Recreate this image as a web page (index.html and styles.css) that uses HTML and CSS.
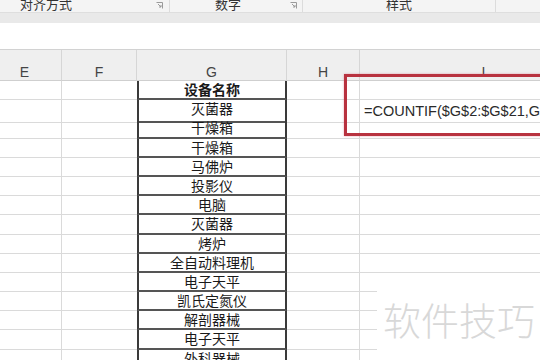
FILE: index.html
```html
<!DOCTYPE html>
<html lang="zh-CN">
<head>
    <meta charset="UTF-8">
    <meta name="viewport" content="width=device-width, initial-scale=1.0">
    <title>COUNTIF</title>
    <link rel="stylesheet" href="styles.css">
</head>
<body>

    <!-- Ribbon group labels (cut at the top) -->
    <div class="ribbon">
        <div class="group group-align">
            <span class="group-label">对齐方式</span>
            <svg class="launcher" width="7" height="7" viewBox="0 0 7 7"><path d="M0.5 0.5H6.5V6.5" fill="none" stroke="#9a9a9a"/><path d="M2 2L5 5M5 3V5H3" fill="none" stroke="#9a9a9a"/></svg>
        </div>
        <div class="group group-number">
            <span class="group-label">数字</span>
            <svg class="launcher" width="7" height="7" viewBox="0 0 7 7"><path d="M0.5 0.5H6.5V6.5" fill="none" stroke="#9a9a9a"/><path d="M2 2L5 5M5 3V5H3" fill="none" stroke="#9a9a9a"/></svg>
        </div>
        <div class="group group-style">
            <span class="group-label">样式</span>
        </div>
        <div class="group group-rest"></div>
    </div>
    <div class="ribbon-band"></div>
    <div class="formula-area"></div>

    <section class="sheet">
        <div class="row head">
            <div class="cell">E</div>
            <div class="cell">F</div>
            <div class="cell">G</div>
            <div class="cell">H</div>
            <div class="cell">I</div>
        </div>

        <div class="row"><div class="cell"></div><div class="cell"></div><div class="cell name title">设备名称</div><div class="cell"></div><div class="cell"></div></div>
        <div class="row"><div class="cell"></div><div class="cell"></div><div class="cell name">灭菌器</div><div class="cell"></div><div class="cell formula">=COUNTIF($G$2:$G$21,G</div></div>
        <div class="row"><div class="cell"></div><div class="cell"></div><div class="cell name">干燥箱</div><div class="cell"></div><div class="cell"></div></div>
        <div class="row"><div class="cell"></div><div class="cell"></div><div class="cell name">干燥箱</div><div class="cell"></div><div class="cell"></div></div>
        <div class="row"><div class="cell"></div><div class="cell"></div><div class="cell name">马佛炉</div><div class="cell"></div><div class="cell"></div></div>
        <div class="row"><div class="cell"></div><div class="cell"></div><div class="cell name">投影仪</div><div class="cell"></div><div class="cell"></div></div>
        <div class="row"><div class="cell"></div><div class="cell"></div><div class="cell name">电脑</div><div class="cell"></div><div class="cell"></div></div>
        <div class="row"><div class="cell"></div><div class="cell"></div><div class="cell name">灭菌器</div><div class="cell"></div><div class="cell"></div></div>
        <div class="row"><div class="cell"></div><div class="cell"></div><div class="cell name">烤炉</div><div class="cell"></div><div class="cell"></div></div>
        <div class="row"><div class="cell"></div><div class="cell"></div><div class="cell name">全自动料理机</div><div class="cell"></div><div class="cell"></div></div>
        <div class="row"><div class="cell"></div><div class="cell"></div><div class="cell name">电子天平</div><div class="cell"></div><div class="cell"></div></div>
        <div class="row"><div class="cell"></div><div class="cell"></div><div class="cell name">凯氏定氮仪</div><div class="cell"></div><div class="cell"></div></div>
        <div class="row"><div class="cell"></div><div class="cell"></div><div class="cell name">解剖器械</div><div class="cell"></div><div class="cell"></div></div>
        <div class="row"><div class="cell"></div><div class="cell"></div><div class="cell name">电子天平</div><div class="cell"></div><div class="cell"></div></div>
        <div class="row"><div class="cell"></div><div class="cell"></div><div class="cell name">外科器械</div><div class="cell"></div><div class="cell"></div></div>

        <!-- Highlight round the formula cell -->
        <div class="highlight"></div>
    </section>

    <div class="watermark">软件技巧</div>

</body>
</html>
```

FILE: styles.css
```css
/* General */
body {
    margin: 0;
    width: 540px;
    height: 360px;
    overflow: hidden;
    position: relative;
    background: #fff;
    font-family: "Liberation Sans", "Noto Sans CJK SC", sans-serif;
    color: #222;
}

/* Ribbon */
.ribbon {
    display: flex;
    height: 12px;
    background: #f4f4f4;
    border-bottom: 1px solid #dedede;
    overflow: hidden;
}

.group {
    display: flex;
    align-items: flex-start;
    border-right: 1px solid #dcdcdc;
    box-sizing: border-box;
}

.group-label {
    font-family: "Noto Sans CJK SC", sans-serif;
    font-size: 13px;
    line-height: 13px;
    margin-top: -3px;
    color: #333;
}

.launcher {
    margin-left: auto;
    margin-top: 2px;
}

.group-align {
    width: 170px;
    padding: 0 6px 0 20px;
}

.group-number {
    width: 133px;
    padding: 0 5px 0 45px;
}

.group-style {
    width: 193px;
    justify-content: center;
}

.group-rest {
    flex: 1;
    border-right: none;
}

.ribbon-band {
    height: 10px;
    background: #e9e9e9;
}

.formula-area {
    height: 26px;
    background: #fff;
    border-bottom: 1px solid #d2d2d2;
}

/* Sheet */
.sheet {
    position: relative;
    margin-left: -12px;
    width: 620px;
}

.row {
    display: grid;
    grid-template-columns: 74px 75px 150px 73px 1fr;
    height: 19.2px;
}

.cell {
    box-sizing: border-box;
    border-right: 1px solid #dadada;
    border-bottom: 1px solid #dadada;
    font-size: 14px;
    line-height: 18px;
    white-space: nowrap;
}

.row.head {
    height: 31px;
    background: #efefef;
}

.row.head .cell {
    text-align: center;
    color: #444;
    padding-top: 15px;
    line-height: 14px;
    border-bottom-color: #cfcfcf;
    border-right-color: #d6d6d6;
}

.row .cell:nth-child(2) {
    border-right: none;
}

.row.head .cell:nth-child(2) {
    border-right: 1px solid #d6d6d6;
}

.cell.name {
    border-left: 2px solid #3a3a3a;
    border-right: 2px solid #3a3a3a;
    border-bottom: 2px solid #555;
    text-align: center;
    font-family: "Noto Sans CJK SC", sans-serif;
    font-size: 14px;
    line-height: 17px;
    color: #1a1a1a;
}

.cell.title {
    font-weight: bold;
}

.cell.formula {
    padding-left: 4px;
    font-size: 14.5px;
    line-height: 22px;
    color: #2a2a2a;
    overflow: visible;
}

/* Red frame round the formula */
.highlight {
    position: absolute;
    left: 356px;
    top: 24px;
    width: 240px;
    height: 62px;
    box-sizing: border-box;
    border: 3px solid #b8323f;
    box-shadow: 0 0 2px rgba(210, 80, 100, 0.5);
}

/* Watermark */
.watermark {
    position: absolute;
    left: 377px;
    top: 279px;
    width: 163px;
    height: 81px;
    background: #fff;
    box-sizing: border-box;
    padding: 18px 0 0 6px;
    font-family: "Noto Sans CJK SC", sans-serif;
    font-weight: 300;
    font-size: 38px;
    line-height: 44px;
    color: #d8d8d8;
    white-space: nowrap;
}
```
